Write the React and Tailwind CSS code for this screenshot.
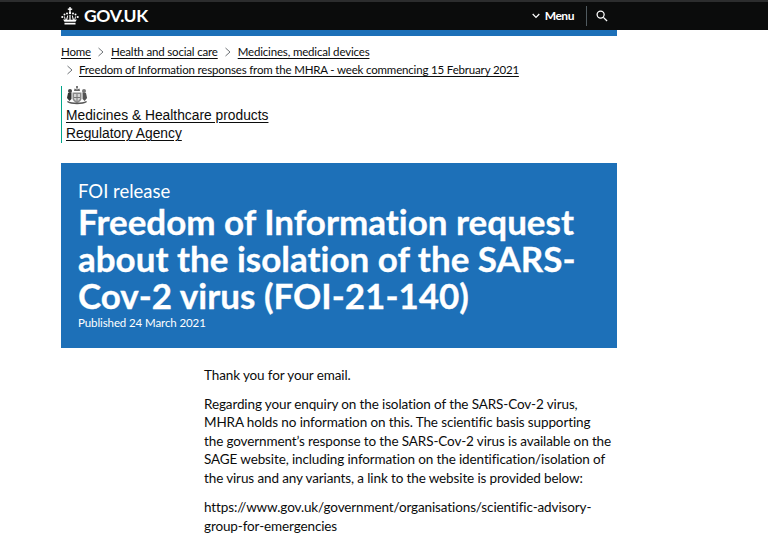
const Crown = () => (
  <svg width="18" height="18" viewBox="0 0 18 18" className="block" fill="white">
    <rect x="8.300" y="0" width="1.400" height="5" />
    <rect x="6.800" y="1.500" width="4.400" height="1.400" />
    <circle cx="9" cy="6" r="1.200" />
    <circle cx="6" cy="6.500" r="1" /><circle cx="12" cy="6.500" r="1" />
    <circle cx="3.500" cy="7.500" r="1" /><circle cx="14.500" cy="7.500" r="1" />
    <circle cx="1.300" cy="10" r="1.100" /><circle cx="16.700" cy="10" r="1.100" />
    <rect x="8.400" y="8" width="1.200" height="5" />
    <path d="M6.200 8.500l-1.200 4.500h1.200l1-4.500zM11.800 8.500l1.200 4.500h-1.200l-1-4.500z" />
    <path d="M3 9.500l.8 3.500h1l-.9-3.500zM15 9.500l-.8 3.500h-1l.9-3.500z" />
    <path d="M2 12l1.500 3h11L16 12l-1 .8-.8-.1H3.800L3 12.800z" />
    <rect x="3" y="14" width="12" height="1.200" fill="#0b0c0c" opacity="0.300" />
    <rect x="3.500" y="15.800" width="11" height="1.700" />
  </svg>
);

const Chevron = ({ className = "" }) => (
  <svg width="8" height="10" viewBox="0 0 8 10" fill="none" stroke="#6f7377" strokeWidth="1" className={className}>
    <path d="M1.500 1l4.500 4-4.500 4" />
  </svg>
);

const Crest = () => (
  <svg width="22" height="19" viewBox="0 0 22 19" className="block">
    <rect x="10.200" y="0" width="1.600" height="2.500" fill="#555" />
    <path d="M8 5l.5-2.500 2.500 1 2.500-1L14 5z" fill="#666" />
    <path d="M6.500 6.500h9v6c0 2.200-2.200 3.500-4.500 4.500-2.300-1-4.500-2.300-4.500-4.500z" fill="#8a8a8a" />
    <path d="M8 8h6v4.500c0 1.200-1.500 2-3 2.800-1.500-.8-3-1.600-3-2.800z" fill="#d5d5d5" />
    <path d="M10.500 8h1v7h-1zM8 11h6v1H8z" fill="#777" />
    <circle cx="4" cy="5" r="2" fill="#444" />
    <path d="M2 7l3.500-.5L5.500 13l-2 2-2.500-3z" fill="#333" />
    <circle cx="18" cy="5" r="2" fill="#777" />
    <path d="M20 7l-3.500-.5.1 6.500 2 2 2.500-3z" fill="#555" />
    <path d="M1 16c4 3 16 3 20 0l-.8-1c-4 2-14.400 2-18.400 0z" fill="#555" />
  </svg>
);

const bc = "underline underline-offset-[2px] decoration-1";

export default function App() {
  return (
    <div className="h-[539px] w-[768px] overflow-hidden bg-white text-[#0b0c0c] font-['Lato',sans-serif] [font-variant-ligatures:none]">
      <header className="h-[30px] bg-[#0b0c0c] border-t-2 border-[#2c2d2e] flex items-center justify-between pl-[61px] pr-[160px] text-white">
        <div className="flex items-center">
          <Crown />
          <span className="ml-[5px] text-[17.500px] font-bold leading-none tracking-[-0.4px]">GOV.UK</span>
        </div>
        <div className="flex items-center">
          <svg width="8" height="6" viewBox="0 0 8 6" fill="none" stroke="white" strokeWidth="1.200"><path d="M.7 1l3.300 3.500L7.300 1" /></svg>
          <span className="ml-[5px] text-[12px] font-bold leading-none tracking-[-0.45px]">Menu</span>
          <div className="ml-[12px] w-px h-[20px] bg-[#505a5f]" />
          <svg className="ml-[9px]" width="12" height="12" viewBox="0 0 13 13" fill="none" stroke="white" strokeWidth="1.400"><circle cx="5" cy="5" r="3.800" /><path d="M8 8l4 4" /></svg>
        </div>
      </header>
      <main className="ml-[61px] w-[556px]">
        <div className="h-[6px] bg-[#1d70b8]" />
        <nav className="mt-[7px] text-[11.500px] leading-[18px] tracking-[-0.17px]">
          <div className="flex items-center">
            <a className={bc}>Home</a>
            <Chevron className="mx-[6px]" />
            <a className={bc}>Health and social care</a>
            <Chevron className="mx-[6px]" />
            <a className={bc}>Medicines, medical devices</a>
          </div>
          <div className="flex items-center pl-[5px]">
            <Chevron className="mr-[5px]" />
            <a className={bc}>Freedom of Information responses from the MHRA - week commencing 15 February 2021</a>
          </div>
        </nav>
        <div className="mt-[7px] border-l border-[#00a58a] pl-[4px] h-[57px] font-['Liberation_Sans',sans-serif] text-[13.800px] leading-[18px]">
          <Crest />
          <div className="mt-[2px] underline underline-offset-[2px] decoration-1 w-[220px]">Medicines &amp; Healthcare products<br />Regulatory Agency</div>
        </div>
        <section className="mt-[20px] h-[185px] bg-[#1d70b8] text-white pl-[17px] pr-[18px] pt-[17px]">
          <p className="text-[18.500px] leading-[22px]">FOI release</p>
          <h1 className="mt-[1px] text-[35px] font-bold leading-[37px] [-webkit-text-stroke:0.3px_white]">Freedom of Information request about the isolation of the SARS-Cov-2 virus (FOI-21-140)</h1>
          <p className="mt-[1px] text-[11.500px] leading-[16px] tracking-[-0.1px]">Published 24 March 2021</p>
        </section>
        <article className="ml-[143px] mt-[18px] w-[408px] text-[13.500px] leading-[18.500px] tracking-[-0.12px]">
          <p>Thank you for your email.</p>
          <p className="mt-[10px]">Regarding your enquiry on the isolation of the SARS-Cov-2 virus, MHRA holds no information on this. The scientific basis supporting the government’s response to the SARS-Cov-2 virus is available on the SAGE website, including information on the identification/isolation of the virus and any variants, a link to the website is provided below:</p>
          <p className="mt-[11px]">https://www.gov.uk/government/organisations/scientific-advisory-group-for-emergencies</p>
        </article>
      </main>
    </div>
  );
}
